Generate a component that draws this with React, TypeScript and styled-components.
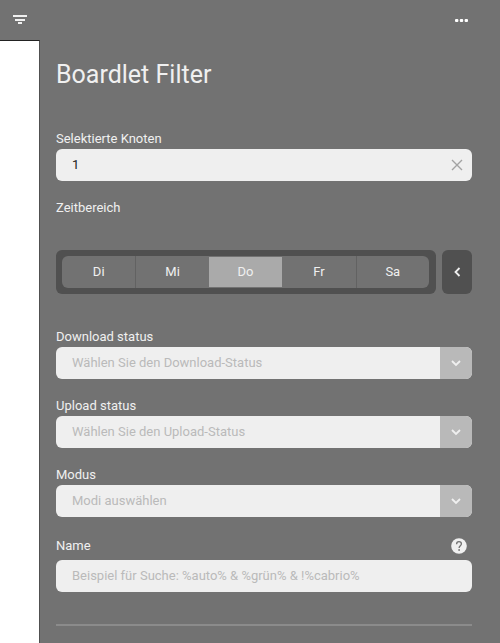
import React from "react";
import styled, { createGlobalStyle } from "styled-components";

const GlobalStyle = createGlobalStyle`
  *, *::before, *::after { box-sizing: border-box; }
  body {
    margin: 0;
    background: #727272;
    color: #f0f0f0;
    font: 13px/20px Roboto, sans-serif;
  }
  button, input, select { font: inherit; color: inherit; border: 0; margin: 0; padding: 0; }
  button { background: none; cursor: pointer; }
`;

const Page = styled.div`
  display: flex;
  min-height: 100vh;
`;

const Rail = styled.aside`
  display: flex;
  flex-direction: column;
  flex: 0 0 40px;
`;

const FilterButton = styled.button`
  display: flex;
  align-items: center;
  justify-content: center;
  height: 40px;
`;

const RailBody = styled.div`
  flex: 1;
  background: #fff;
  border-top: 1px solid #222;
  border-right: 1px solid #505050;
`;

const Panel = styled.main`
  flex: 1;
  min-width: 0;
  padding: 0 28px 16px 16px;
`;

const TopBar = styled.header`
  display: flex;
  align-items: center;
  justify-content: flex-end;
  height: 40px;
`;

const MoreButton = styled.button`
  display: flex;
  padding: 8px 4px;
`;

const Title = styled.h1`
  margin: 17px 0 36px;
  font-size: 25px;
  font-weight: 400;
  line-height: 36px;
`;

const Form = styled.form`
  display: flex;
  flex-direction: column;
  gap: 17px;
`;

const Field = styled.div`
  display: flex;
  flex-direction: column;
`;

const NameField = styled(Field)`
  gap: 4px;
  margin-top: 2px;
`;

const LabelRow = styled.div`
  display: flex;
  align-items: center;
  justify-content: space-between;
  padding-right: 5px;
`;

const HelpButton = styled.button`
  display: flex;
`;

const Control = styled.div`
  display: flex;
  height: 32px;
  overflow: hidden;
  border-radius: 6px;
  background: #efefef;
`;

const TextInput = styled.input`
  flex: 1;
  min-width: 0;
  padding: 0 16px;
  background: transparent;
  color: #222;
  outline-offset: -2px;
  &::placeholder { color: #bababa; opacity: 1; }
`;

const ClearButton = styled.button`
  display: flex;
  align-items: center;
  justify-content: center;
  width: 30px;
  color: #a3a3a3;
`;

const SelectGrid = styled(Control)`
  display: grid;
  grid-template-columns: 1fr 32px;
`;

const SelectInput = styled.select`
  grid-area: 1 / 1 / 2 / 3;
  appearance: none;
  padding: 0 48px 0 16px;
  background: transparent;
  color: #bababa;
  z-index: 1;
`;

const SelectArrow = styled.span`
  grid-area: 1 / 2;
  display: flex;
  align-items: center;
  justify-content: center;
  background: #b9b9b9;
  color: #f0f0f0;
`;

const RangeField = styled.fieldset`
  min-width: 0;
  margin: 0 0 16px;
  padding: 0;
  border: 0;
`;

const RangeLegend = styled.legend`
  padding: 0;
  margin-bottom: 32px;
`;

const RangeRow = styled.div`
  display: flex;
  gap: 6px;
`;

const DayTrack = styled.div`
  flex: 1;
  padding: 6px 7px 6px 6px;
  border-radius: 6px;
  background: #505050;
`;

const DayGroup = styled.div`
  display: grid;
  grid-template-columns: repeat(5, 1fr);
  height: 32px;
  overflow: hidden;
  border-radius: 6px;
`;

const DayButton = styled.button<{ $selected: boolean; $divided: boolean }>`
  background: ${(p) => (p.$selected ? "#aaa" : "#727272")};
  border-style: solid;
  border-color: #727272 #727272 #727272 #626262;
  border-width: ${(p) => (p.$selected ? "1px 0" : p.$divided ? "0 0 0 1px" : "0")};
`;

const BackButton = styled.button`
  display: flex;
  align-items: center;
  justify-content: center;
  width: 30px;
  border-radius: 6px;
  background: #505050;
`;

const Divider = styled.hr`
  height: 2px;
  margin: 32px 0 0;
  border: 0;
  background: #8b8b8b;
`;

const days = ["Di", "Mi", "Do", "Fr", "Sa"];

const ChevronIcon = ({ left = false }: { left?: boolean }) => (
  <svg width="12" height="12" viewBox="0 0 12 12" fill="none" stroke="currentColor" strokeWidth="1.8" aria-hidden="true">
    <path d={left ? "M8.5 2l-4 4 4 4" : "M2 4l4 4 4-4"} />
  </svg>
);

function SelectField({ id, label, placeholder }: { id: string; label: string; placeholder: string }) {
  return (
    <Field>
      <label htmlFor={id}>{label}</label>
      <SelectGrid>
        <SelectInput id={id} defaultValue="">
          <option value="">{placeholder}</option>
        </SelectInput>
        <SelectArrow><ChevronIcon /></SelectArrow>
      </SelectGrid>
    </Field>
  );
}

export default function App() {
  const [day, setDay] = React.useState("Do");
  const [nodes, setNodes] = React.useState("1");
  return (
    <>
      <GlobalStyle />
      <Page>
        <Rail>
          <FilterButton type="button" aria-label="Filter">
            <svg width="14" height="10" viewBox="0 0 14 10" fill="#f0f0f0" aria-hidden="true">
              <path d="M0 0h14v2H0zM2 4h10v2H2zM5 7h4v2H5z" />
            </svg>
          </FilterButton>
          <RailBody />
        </Rail>
        <Panel>
          <TopBar>
            <MoreButton type="button" aria-label="Menü">
              <svg width="13" height="3" viewBox="0 0 13 3" fill="#fff" aria-hidden="true">
                <rect width="3.4" height="3" rx="1" />
                <rect x="4.8" width="3.4" height="3" rx="1" />
                <rect x="9.6" width="3.4" height="3" rx="1" />
              </svg>
            </MoreButton>
          </TopBar>
          <Title>Boardlet Filter</Title>
          <Form onSubmit={(e) => e.preventDefault()}>
            <Field>
              <label htmlFor="nodes">Selektierte Knoten</label>
              <Control>
                <TextInput id="nodes" value={nodes} onChange={(e) => setNodes(e.target.value)} />
                <ClearButton type="button" aria-label="Löschen" onClick={() => setNodes("")}>
                  <svg width="12" height="12" viewBox="0 0 12 12" stroke="currentColor" strokeWidth="1.4" aria-hidden="true">
                    <path d="M1 1l10 10M11 1 1 11" />
                  </svg>
                </ClearButton>
              </Control>
            </Field>
            <RangeField>
              <RangeLegend>Zeitbereich</RangeLegend>
              <RangeRow>
                <DayTrack>
                  <DayGroup>
                    {days.map((d, i) => (
                      <DayButton
                        key={d}
                        type="button"
                        $selected={d === day}
                        $divided={i > 0 && days[i - 1] !== day}
                        aria-pressed={d === day}
                        onClick={() => setDay(d)}
                      >
                        {d}
                      </DayButton>
                    ))}
                  </DayGroup>
                </DayTrack>
                <BackButton type="button" aria-label="Zurück"><ChevronIcon left /></BackButton>
              </RangeRow>
            </RangeField>
            <SelectField id="download" label="Download status" placeholder="Wählen Sie den Download-Status" />
            <SelectField id="upload" label="Upload status" placeholder="Wählen Sie den Upload-Status" />
            <SelectField id="mode" label="Modus" placeholder="Modi auswählen" />
            <NameField>
              <LabelRow>
                <label htmlFor="name">Name</label>
                <HelpButton type="button" aria-label="Hilfe">
                  <svg width="16" height="16" viewBox="0 0 16 16" fill="none" aria-hidden="true">
                    <circle cx="8" cy="8" r="7.8" fill="#f0f0f0" />
                    <path d="M5.6 6.2C5.6 4.6 6.6 3.7 8 3.7s2.4.9 2.4 2.2c0 1.7-2.3 1.9-2.3 4" stroke="#727272" strokeWidth="1.3" />
                    <circle cx="8.1" cy="12" r=".9" fill="#727272" />
                  </svg>
                </HelpButton>
              </LabelRow>
              <Control>
                <TextInput id="name" placeholder="Beispiel für Suche: %auto% & %grün% & !%cabrio%" />
              </Control>
            </NameField>
          </Form>
          <Divider />
        </Panel>
      </Page>
    </>
  );
}
